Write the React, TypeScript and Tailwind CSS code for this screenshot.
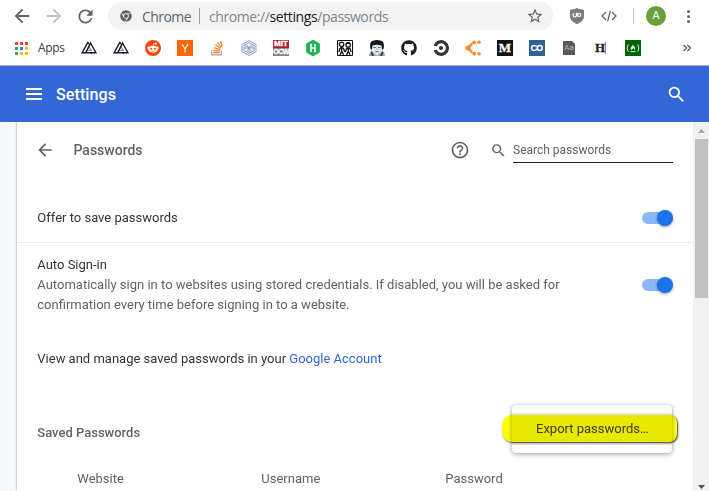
import React from "react";
import { FaChrome, FaGithub } from "react-icons/fa";

const SEARCH =
  "M15.5 14h-.79l-.28-.27A6.471 6.471 0 0 0 16 9.5 6.5 6.5 0 1 0 9.5 16c1.61 0 3.09-.59 4.23-1.57l.27.28v.79l5 4.99L20.49 19l-4.99-5zm-6 0C7.01 14 5 11.99 5 9.5S7.01 5 9.5 5 14 7.01 14 9.5 11.99 14 9.5 14z";
const BACK = "M20 11H7.83l5.59-5.59L12 4l-8 8 8 8 1.41-1.41L7.83 13H20v-2z";
const FORWARD = "M12 4l-1.41 1.41L16.17 11H4v2h12.17l-5.58 5.59L12 20l8-8z";
const REFRESH =
  "M17.65 6.35C16.2 4.9 14.21 4 12 4c-4.42 0-7.99 3.58-7.99 8s3.57 8 7.99 8c3.73 0 6.84-2.55 7.73-6h-2.08c-.82 2.33-3.04 4-5.65 4-3.31 0-6-2.69-6-6s2.69-6 6-6c1.66 0 3.14.69 4.22 1.78L13 11h7V4l-2.35 2.35z";
const STAR =
  "M22 9.24l-7.19-.62L12 2 9.19 8.63 2 9.24l5.46 4.73L5.82 21 12 17.27 18.18 21l-1.63-7.03L22 9.24zM12 15.4l-3.76 2.27 1-4.28-3.32-2.88 4.38-.38L12 6.1l1.71 4.04 4.38.38-3.32 2.88 1 4.28L12 15.4z";
const HELP =
  "M11 18h2v-2h-2v2zm1-16C6.48 2 2 6.48 2 12s4.48 10 10 10 10-4.48 10-10S17.52 2 12 2zm0 18c-4.41 0-8-3.59-8-8s3.59-8 8-8 8 3.59 8 8-3.59 8-8 8zm0-14c-2.21 0-4 1.79-4 4h2c0-1.1.9-2 2-2s2 .9 2 2c0 2-3 1.75-3 5h2c0-2.25 3-2.5 3-5 0-2.21-1.79-4-4-4z";

function Glyph({ d, className }: { d: string; className: string }) {
  return (
    <svg viewBox="0 0 24 24" fill="currentColor" className={`shrink-0 ${className}`}>
      <path d={d} />
    </svg>
  );
}

function Icon16({ children }: { children: React.ReactNode }) {
  return (
    <svg viewBox="0 0 16 16" className="size-4 shrink-0">
      {children}
    </svg>
  );
}

const APP_COLORS = [
  "bg-[#ea4335]", "bg-[#ea4335]", "bg-[#ea4335]",
  "bg-[#34a853]", "bg-[#1a86f0]", "bg-[#fbbc05]",
  "bg-[#34a853]", "bg-[#fbbc05]", "bg-[#fbbc05]",
];

function Triangles() {
  return (
    <Icon16>
      <g fill="none">
        <path d="M5.600 10.400 8 6.600l2.400 3.800Z" stroke="#8d90a0" strokeWidth="1.200" />
        <path d="M8.600 4.600 6.800 2.400 1 12.800H11" stroke="#17172b" strokeWidth="1.400" />
        <path d="M5 12.300 9.600 3l5.400 9.800H9" stroke="#17172b" strokeWidth="1.400" />
      </g>
    </Icon16>
  );
}

function Toolbar() {
  return (
    <div className="flex h-8 items-center pl-[11px] text-[#5f6368]">
      <Glyph d={BACK} className="size-[22px]" />
      <Glyph d={FORWARD} className="ml-[10px] size-[22px] text-[#bdc1c6]" />
      <Glyph d={REFRESH} className="ml-[10px] size-[21px]" />
      <div className="ml-[12px] flex h-7 w-[445px] items-center rounded-full bg-[#f1f3f4] pl-3 font-['Open_Sans','Noto_Sans',sans-serif] text-[14px]">
        <FaChrome className="size-3 shrink-0" />
        <span className="ml-[10px] w-[50px] whitespace-nowrap tracking-[-0.55px]">Chrome</span>
        <span className="ml-[7px] h-4 w-px bg-[#9aa0a6]" />
        <span className="ml-[9px] w-[182px] whitespace-nowrap tracking-[-0.41px] text-[#80868b]">
          chrome://<span className="text-[#202124]">settings</span>/passwords
        </span>
        <Glyph d={STAR} className="mr-[9px] ml-auto size-[18px]" />
      </div>
      <svg viewBox="0 0 14 16" className="ml-[17px] h-4 w-[14px] shrink-0">
        <path d="M7 0C5 1.3 3 1.7 0 1.7V8c0 4 3 6.500 7 8 4-1.500 7-4 7-8V1.700C11 1.700 9 1.300 7 0Z" fill="#7d7d7d" />
        <g fill="none" stroke="#fff" strokeWidth="1.200">
          <path d="M3.200 5v2.300a1.500 1.500 0 0 0 3.200 0V5" />
          <path d="M7.200 4.800v3.600" />
          <circle cx="9.200" cy="7" r="1.500" />
        </g>
      </svg>
      <svg viewBox="0 0 16 12" className="ml-[17px] h-3 w-4 shrink-0" fill="none" stroke="#5f6368" strokeWidth="1.300">
        <path d="M5 2 1 6l4 4M11 2l4 4-4 4M9.300 .8 6.700 11.200" />
      </svg>
      <span className="ml-4 h-4 w-px bg-[#c6c8cb]" />
      <span className="ml-3 flex size-5 items-center justify-center rounded-full bg-[#689f38] font-['Roboto',sans-serif] text-[11.5px] text-white">
        A
      </span>
      <span className="ml-[21px] flex flex-col gap-[2px]">
        <i className="size-[3px] rounded-full bg-[#5f6368]" />
        <i className="size-[3px] rounded-full bg-[#5f6368]" />
        <i className="size-[3px] rounded-full bg-[#5f6368]" />
      </span>
    </div>
  );
}

function Bookmarks() {
  return (
    <div className="flex h-[34px] items-center border-b border-[#b3b3b5] pb-px pl-[15px]">
      <div className="grid grid-cols-3 gap-[2px]">
        {APP_COLORS.map((c, i) => (
          <i key={i} className={`size-[3px] ${c}`} />
        ))}
      </div>
      <span className="ml-[10px] w-[43px] font-['Open_Sans','Noto_Sans',sans-serif] text-[12px] tracking-[-0.3px] text-[#3c4043]">
        Apps
      </span>
      <div className="flex gap-4">
        <Triangles />
        <Triangles />
        <Icon16>
          <circle cx="8" cy="8" r="8" fill="#ff4500" />
          <g fill="#fff">
            <ellipse cx="8" cy="9.300" rx="4.700" ry="3.500" />
            <circle cx="3.600" cy="7.900" r="1.300" />
            <circle cx="12.400" cy="7.900" r="1.300" />
            <circle cx="10.900" cy="3.800" r="1" />
          </g>
          <path d="m8 6 .8-2.700 2 .5" fill="none" stroke="#fff" strokeWidth=".7" />
          <circle cx="6.200" cy="8.700" r=".95" fill="#ff4500" />
          <circle cx="9.800" cy="8.700" r=".95" fill="#ff4500" />
          <path d="M6.200 10.900q1.800 1.100 3.600 0" fill="none" stroke="#ff4500" strokeWidth=".7" />
        </Icon16>
        <Icon16>
          <path d="M0 0h16v16H0z" fill="#ff6600" />
          <path d="m5 4 3 5 3-5M8 8.800V12.500" fill="none" stroke="#fff" strokeWidth="1.200" />
        </Icon16>
        <Icon16>
          <path d="M2.700 10.500v4.300h9.600v-4.300" fill="none" stroke="#a0a3a6" strokeWidth="1.200" />
          <path d="M4.200 12.700h6.600M4.300 10.300l6.600.8M4.900 7.600l6.200 2M6.300 4.700l5.300 3.600M8.600 2.500l3.900 4.900M11.600 1l1.500 5.500" stroke="#f48024" strokeWidth="1.200" fill="none" />
        </Icon16>
        <Icon16>
          <path d="M8 .6 15 4.300v7.500l-7 3.700-7-3.700V4.300Z" fill="#eef1f7" stroke="#8795bb" strokeWidth=".9" />
          <path d="M8 2.700 13 5.300v5.300L8 13.300 3 10.700V5.300ZM3 5.300l5 2.600 5-2.600M8 8v5.300M5.300 4.200l5.400 7.800M10.700 4.200 5.300 12M3 8h10" fill="none" stroke="#8b98b8" strokeWidth=".8" />
        </Icon16>
        <span className="flex size-4 flex-col font-['Liberation_Sans',sans-serif] leading-[8px] font-bold text-white">
          <span className="h-2 bg-[#ad1f2b] text-center text-[8px] leading-[8px] [-webkit-text-stroke:0.4px_white]">MIT</span>
          <span className="h-2 bg-[#858585] text-center text-[7px] leading-[8px] tracking-[-0.6px] [-webkit-text-stroke:0.3px_white]">OCW</span>
        </span>
        <Icon16>
          <path d="M8 0q.6 0 1.200.3l4.800 2.800q.9.600.9 1.500v6.800q0 .9-.9 1.500l-4.800 2.800Q8 16.300 6.800 15.700L2 12.900q-.9-.6-.9-1.500V4.600q0-.9.900-1.500L6.800.300Q7.400 0 8 0Z" fill="#1fb455" />
          <path d="M6 4v8M10 4v8M6 8h4M5 4.500h2M9 11.500h2" fill="none" stroke="#fff" strokeWidth="1.500" />
        </Icon16>
        <Icon16>
          <path d="M.5.5h15v15H.5z" fill="#fff" stroke="#111" />
          <g fill="#fff" stroke="#111" strokeWidth="1.300">
            <circle cx="4.600" cy="4.300" r="2.200" />
            <circle cx="11.200" cy="5" r="2.200" />
          </g>
          <path d="M3 8 1.800 12M6.400 8l1.300 4M4.700 7v4.500M4.700 11 3 15M4.700 11l1.800 4M9.800 8l-1.600 4M12.800 8l1.400 4M11.300 8v3.500M11.300 11.300 9.500 15M11.300 11.300 13.200 15M3 8h3.400M9.800 8.500h3" fill="none" stroke="#111" strokeWidth="1.300" />
          <path d="M9 4.500q2.200-2 4.600 0L12.500 2h-2.700Z" fill="#111" />
        </Icon16>
        <Icon16>
          <path d="M0 16q0-4 3.200-4.500l9.600 0q3.200.5 3.200 4.500Z" fill="#9fb0ba" />
          <path d="M3.300 5h9.400v6.500L8 15.500l-4.700-4Z" fill="#dce8ee" />
          <path d="M1.300 8.500Q.2 1.500 4 .7 8-.5 12 .7q3.800.8 2.700 7.800l-1.500 1.500-.7-4.600Q8 4 3.500 5.400L2.800 10Z" fill="#171717" />
          <path d="M4.300 7.500h2.700M9 7.500h2.700M6.300 11.700h3.400" stroke="#5d717b" strokeWidth="1" />
          <path d="m2.800 10.700 2.200 5.300H3L1.500 13M13.200 10.700 11 16h2l1.500-3" fill="#30414a" />
          <path d="M8 7.500v2.500" stroke="#9db0ba" strokeWidth=".8" />
        </Icon16>
        <FaGithub className="size-4 shrink-0 text-[#1b1f23]" />
        <Icon16>
          <path d="M2.200 6A6.300 6.300 0 1 1 2.200 10" fill="none" stroke="#343434" strokeWidth="3.100" />
          <circle cx="8" cy="8" r="2" fill="#343434" />
        </Icon16>
        <Icon16>
          <path d="M6.600 4.200 3 8l3.600 3.800" stroke="#f68d2e" strokeWidth="2.600" strokeLinecap="round" strokeLinejoin="round" fill="none" />
          <g fill="#f68d2e">
            <circle cx="2.900" cy="8" r="2.500" />
            <circle cx="9.200" cy="2.300" r="1.900" />
            <circle cx="9.200" cy="13.700" r="1.900" />
            <circle cx="14" cy="2.300" r="1.800" />
            <circle cx="14" cy="13.700" r="1.800" />
          </g>
        </Icon16>
        <span className="flex size-4 items-center justify-center bg-[#121212] font-['Liberation_Serif',serif] text-[13px] leading-4 font-bold text-white [-webkit-text-stroke:0.3px_white]">
          M
        </span>
        <Icon16>
          <path d="M0 0h16v16H0z" fill="#355f9b" />
          <path d="M7.600 6.600Q6.600 5.500 5.100 5.500a2.500 2.500 0 0 0 0 5q1.500 0 2.700-1.500" fill="none" stroke="#fff" strokeWidth="1.500" />
          <circle cx="10.700" cy="8" r="2.500" fill="none" stroke="#fff" strokeWidth="1.500" />
        </Icon16>
        <span className="flex w-4 justify-center">
          <span className="mt-px h-[14px] w-3 bg-[#5a5a5a] text-center font-['Roboto',sans-serif] text-[8px] leading-[14px] text-[#b8b8b8] [clip-path:polygon(0_0,75%_0,100%_22%,100%_100%,0_100%)]">
            Aa
          </span>
        </span>
        <span className="flex size-4 items-center pl-[2px] font-['Liberation_Serif',serif] text-[13px] leading-4 font-bold text-[#222] [-webkit-text-stroke:0.3px_#222]">
          H<i className="h-3 w-px shrink-0 bg-[#888]" />
        </span>
        <Icon16>
          <path d="M0 0h16v16H0z" fill="#006400" />
          <path d="M3.300 4.300q-2.500 3.700 0 7.400M12.700 4.300q2.500 3.700 0 7.400M5.500 11.600h5" fill="none" stroke="#d7ead7" strokeWidth="1" />
          <path d="M7.500 3.800q.3 1.800 1.500 2.200t1.200 2.300Q10 10.300 9 10.300q.8-1.300-.5-2.300-.3 1-1.200 1t-.3 1.300Q5.600 10 5.600 8.400 5.800 7 6.800 6.300 7.800 5.500 7.500 3.800Z" fill="#cfe5cf" />
        </Icon16>
      </div>
      <svg viewBox="0 0 8 8" className="ml-[42px] size-2 shrink-0" fill="none" stroke="#5f6368" strokeWidth="1.400">
        <path d="m.6 1 3 3-3 3M4.400 1l3 3-3 3" />
      </svg>
    </div>
  );
}

function Toggle() {
  return (
    <span className="flex h-3 w-[31px] shrink-0 items-center">
      <span className="h-3 w-7 rounded-full bg-[#8cb8f6]" />
      <span className="-ml-[13px] size-4 shrink-0 rounded-full bg-[#1a73e8] shadow-[0_1px_3px_rgba(0,0,0,0.4)]" />
    </span>
  );
}

function ExportMenu() {
  return (
    <div className="absolute top-[283px] left-[495px] h-12 w-40 rounded-[4px] bg-white py-2 shadow-[0_1px_4px_rgba(60,64,67,0.55)]">
      <div className="h-8 bg-[#e8e8e8]" />
      <div className="absolute top-[10px] -left-[10px] h-[27px] w-[175px] rounded-[10px_8px_8px_10px] bg-[#ffff00] mix-blend-multiply shadow-[1px_1px_2px_rgba(0,0,0,0.75)]" />
      <div className="absolute top-2 left-6 text-[13px] leading-8 whitespace-nowrap text-[#3b3c10]">
        Export passwords…
      </div>
    </div>
  );
}

export default function App() {
  return (
    <div className="flex h-[491px] w-[709px] flex-col overflow-hidden bg-white font-['Roboto',sans-serif]">
      <Toolbar />
      <Bookmarks />
      <header className="flex h-14 shrink-0 items-center bg-[#3367d6] pr-[22px] pl-[26px] text-white">
        <span className="flex w-4 flex-col gap-[3px]">
          <i className="h-[2px] bg-white" />
          <i className="h-[2px] bg-white" />
          <i className="h-[2px] bg-white" />
        </span>
        <h1 className="mt-[2px] ml-[14px] text-[16px] font-medium tracking-[0.1px]">Settings</h1>
        <Glyph d={SEARCH} className="ml-auto size-[21px]" />
      </header>
      <div className="flex min-h-0 flex-1 bg-[#f8f9fa]">
        <main className="relative ml-[17px] w-[676px] bg-white text-[13px] text-[#5f6368] shadow-[0_0_2px_rgba(60,64,67,0.6)] [clip-path:inset(0_0_0_-4px)]">
          <div className="flex h-14 items-center pl-[18px]">
            <Glyph d={BACK} className="size-5" />
            <h2 className="ml-[18.500px] text-[14px] font-medium">Passwords</h2>
            <Glyph d={HELP} className="ml-auto size-5" />
            <Glyph d={SEARCH} className="ml-5 size-[17px]" />
            <div className="mr-5 ml-[6px] h-[26px] w-40 border-b border-[#202124] text-[12px] leading-[27px]">
              Search passwords
            </div>
          </div>
          <div className="mt-4 flex h-[48px] items-center justify-between pr-5 pl-[20.300px] text-[#333437]">
            <span>Offer to save passwords</span>
            <Toggle />
          </div>
          <div className="flex h-[85px] items-center justify-between border-t border-[#ececec] pr-5 pl-[20.300px]">
            <div className="w-[545px] leading-5">
              <div className="text-[#333437]">Auto Sign-in</div>
              <div>
                Automatically sign in to websites using stored credentials. If disabled, you will be asked for
                <br />
                confirmation every time before signing in to a website.
              </div>
            </div>
            <Toggle />
          </div>
          <div className="mt-[22px] pl-[20.300px] leading-5 text-[#333437]">
            View and manage saved passwords in your <a className="text-[#3367d6]">Google Account</a>
          </div>
          <h3 className="mt-[54px] pl-[20.300px] leading-5 font-medium">Saved Passwords</h3>
          <div className="mt-[26px] flex pl-[60.300px] leading-5">
            <span className="w-[184px]">Website</span>
            <span className="w-[184px]">Username</span>
            <span>Password</span>
          </div>
          <ExportMenu />
        </main>
        <div className="flex w-4 flex-col items-center bg-[#f1f1f1]">
          <svg viewBox="0 0 16 17" className="h-[17px] w-4 shrink-0">
            <path d="M5 11h7L8.500 7Z" fill="#a3a3a3" />
          </svg>
          <div className="ml-px h-[159px] w-[13px] shrink-0 bg-[#c1c1c1]" />
          <svg viewBox="0 0 16 17" className="mt-auto mb-[-4px] h-[17px] w-4 shrink-0">
            <path d="M5 7h7L8.500 11Z" fill="#505050" />
          </svg>
        </div>
      </div>
    </div>
  );
}
